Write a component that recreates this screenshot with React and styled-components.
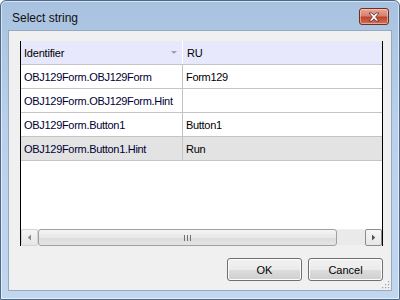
import styled, { createGlobalStyle } from "styled-components";

const Global = createGlobalStyle`
  html, body {
    margin: 0;
    padding: 0;
    background: #ffffff;
  }
  body {
    font-family: "Liberation Sans", Arial, sans-serif;
  }
`;

const rows = [
  { id: "OBJ129Form.OBJ129Form", ru: "Form129" },
  { id: "OBJ129Form.OBJ129Form.Hint", ru: "" },
  { id: "OBJ129Form.Button1", ru: "Button1" },
  { id: "OBJ129Form.Button1.Hint", ru: "Run", selected: true },
];

function CloseIcon() {
  return (
    <svg width="14" height="10" viewBox="0 0 14 10">
      <path
        d="M2 1 L5 1 L7 3.2 L9 1 L12 1 L8.6 5 L12 9 L9 9 L7 6.8 L5 9 L2 9 L5.4 5 Z"
        fill="#ffffff"
        stroke="#5a2a24"
        strokeWidth="0.8"
        strokeLinejoin="round"
      />
    </svg>
  );
}

function Arrow({ dir }) {
  return (
    <svg width="5" height="7" viewBox="0 0 5 7">
      {dir === "left" ? (
        <path d="M4 0.5 L0.8 3.5 L4 6.5 Z" fill="#8a8a8a" />
      ) : (
        <path d="M1 0.5 L4.2 3.5 L1 6.5 Z" fill="#505050" />
      )}
    </svg>
  );
}

function App() {
  return (
    <>
      <Global />
      <Window>
        <TitleBar>
          <Title>Select string</Title>
          <CloseButton>
            <CloseIcon />
          </CloseButton>
        </TitleBar>
        <Client>
          <Grid>
            <Header>
              <HeadCell $first>
                Identifier
                <SortMark />
              </HeadCell>
              <HeadCell>RU</HeadCell>
            </Header>
            {rows.map((row) => (
              <Row key={row.id} $selected={row.selected}>
                <Cell $first>{row.id}</Cell>
                <Cell>{row.ru}</Cell>
              </Row>
            ))}
            <Filler />
            <ScrollBar>
              <ScrollButton>
                <Arrow dir="left" />
              </ScrollButton>
              <Thumb>
                <Grip>
                  <i />
                  <i />
                  <i />
                </Grip>
              </Thumb>
              <Track />
              <ScrollButton $dark>
                <Arrow dir="right" />
              </ScrollButton>
            </ScrollBar>
          </Grid>
          <Buttons>
            <Button>OK</Button>
            <Button>Cancel</Button>
          </Buttons>
          <SizeGrip viewBox="0 0 10 10" width="10" height="10">
            {[
              [8, 2],
              [8, 5],
              [5, 5],
              [8, 8],
              [5, 8],
              [2, 8],
            ].map(([x, y]) => (
              <rect key={`${x}-${y}`} x={x} y={y} width="1.2" height="1.2" fill="#9aa0a8" />
            ))}
          </SizeGrip>
        </Client>
      </Window>
    </>
  );
}

const Window = styled.div`
  box-sizing: border-box;
  width: 400px;
  height: 300px;
  display: flex;
  flex-direction: column;
  border: 1px solid #4b6a8c;
  border-radius: 6px 6px 0 0;
  background: linear-gradient(180deg, #a8c2df 0%, #bad0ea 40%, #c2d6ee 100%);
  box-shadow: inset 0 0 0 1px rgba(255, 255, 255, 0.55);
  padding: 0 7px 8px 7px;
`;

const TitleBar = styled.div`
  height: 29px;
  display: flex;
  align-items: center;
  justify-content: space-between;
  padding: 0 3px 0 4px;
`;

const Title = styled.div`
  font-family: "Liberation Sans", Arial, sans-serif;
  font-size: 12px;
  color: #111;
  padding-top: 5px;
`;

const CloseButton = styled.div`
  box-sizing: border-box;
  width: 30px;
  height: 17px;
  margin-top: 2px;
  border: 1px solid #6e2e25;
  border-radius: 3px;
  background: linear-gradient(180deg, #e9a798 0%, #d8826f 45%, #c0442c 55%, #d2715a 100%);
  box-shadow: inset 0 0 0 1px rgba(255, 220, 210, 0.5);
  display: flex;
  align-items: center;
  justify-content: center;
`;

const Client = styled.div`
  position: relative;
  flex: 1;
  display: flex;
  flex-direction: column;
  background: #f0f0f0;
  border: 1px solid #93aac6;
  padding: 10px 8px 9px 11px;
`;

const Grid = styled.div`
  height: 205px;
  display: flex;
  flex-direction: column;
  border-left: 1px solid #000;
  border-right: 1px solid #000;
  background: #ffffff;
`;

const Header = styled.div`
  display: grid;
  grid-template-columns: 162px 1fr;
  height: 23px;
  background: #e8e8fc;
  border-bottom: 1px solid #c4c4c4;
`;

const HeadCell = styled.div`
  position: relative;
  display: flex;
  align-items: center;
  padding-left: ${(p) => (p.$first ? "3px" : "4px")};
  font-size: 11px;
  letter-spacing: -0.2px;
  color: #000;
  border-right: ${(p) => (p.$first ? "1px solid #ffffff" : "none")};
`;

const SortMark = styled.span`
  position: absolute;
  right: 5px;
  top: 10px;
  width: 0;
  height: 0;
  border-left: 3px solid transparent;
  border-right: 3px solid transparent;
  border-top: 3px solid #a0a0a0;
`;

const Row = styled.div`
  display: grid;
  grid-template-columns: 162px 1fr;
  height: 23px;
  border-bottom: 1px solid #c4c4c4;
  background: ${(p) => (p.$selected ? "#e3e3e3" : "#ffffff")};
`;

const Cell = styled.div`
  display: flex;
  align-items: center;
  padding: 1px 0 0 3px;
  font-size: 11px;
  letter-spacing: -0.3px;
  color: ${(p) => (p.$first ? "#000033" : "#000")};
  border-right: ${(p) => (p.$first ? "1px solid #c4c4c4" : "none")};
  white-space: nowrap;
`;

const Filler = styled.div`
  flex: 1;
`;

const ScrollBar = styled.div`
  height: 17px;
  display: flex;
  background: #f0f0f0;
`;

const ScrollButton = styled.div`
  box-sizing: border-box;
  width: 17px;
  height: 17px;
  border: 1px solid ${(p) => (p.$dark ? "#8c8c8c" : "#d4d4d4")};
  border-radius: 2px;
  background: linear-gradient(180deg, #f6f6f6, #e6e6e6);
  display: flex;
  align-items: center;
  justify-content: center;
`;

const Thumb = styled.div`
  box-sizing: border-box;
  width: 299px;
  height: 17px;
  border: 1px solid #a0a0a0;
  border-radius: 3px;
  background: linear-gradient(180deg, #f4f4f4 0%, #e8e8e8 50%, #dcdcdc 51%, #e4e4e4 100%);
  display: flex;
  align-items: center;
  justify-content: center;
`;

const Grip = styled.div`
  display: flex;
  gap: 2px;
  i {
    width: 1px;
    height: 6px;
    background: #707070;
  }
`;

const Track = styled.div`
  flex: 1;
  height: 15px;
  margin-top: 1px;
  background: #eaeaea;
`;

const Buttons = styled.div`
  display: flex;
  justify-content: flex-end;
  gap: 6px;
  margin-top: 12px;
`;

const Button = styled.div`
  box-sizing: border-box;
  width: 75px;
  height: 23px;
  border: 1px solid #707070;
  border-radius: 3px;
  background: linear-gradient(180deg, #f2f2f2 0%, #ebebeb 50%, #dddddd 51%, #cfcfcf 100%);
  box-shadow: inset 0 0 0 1px #fcfcfc;
  display: flex;
  align-items: center;
  justify-content: center;
  font-size: 11px;
  color: #000;
`;

const SizeGrip = styled.svg`
  position: absolute;
  right: 1px;
  bottom: 1px;
`;

export default App;
